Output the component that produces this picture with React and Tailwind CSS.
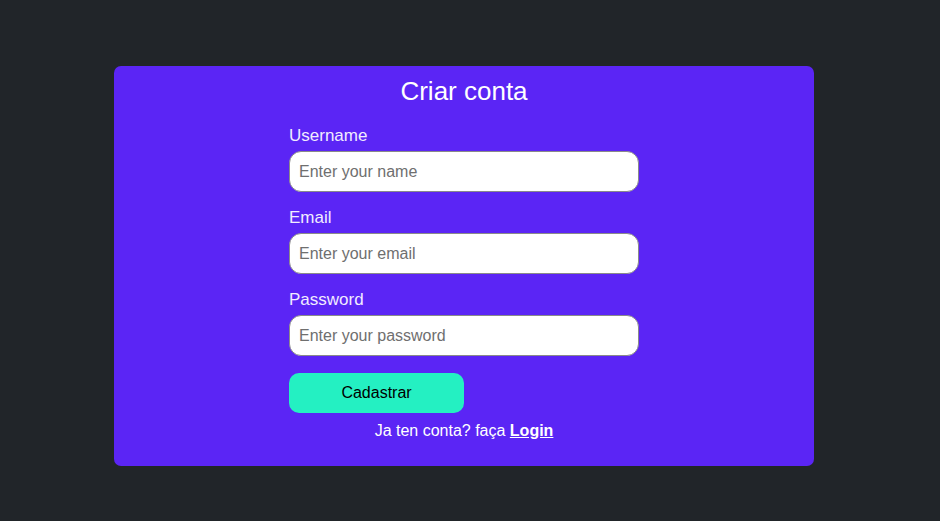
import React from 'react';

const Field = ({ label, type, placeholder }) => (
  <div className="flex flex-col">
    <label className="text-[17px] leading-[20px] text-[#f1ecff] mb-[5px]">{label}</label>
    <input
      type={type}
      placeholder={placeholder}
      className="w-[350px] h-[41px] rounded-[12px] border border-[#8a8a8a] bg-white px-[9px] text-[16px] text-black placeholder:text-[#6f6f6f] outline-none"
    />
  </div>
);

const App = () => {
  return (
    <div className="min-h-screen w-full bg-[#212529] font-['Liberation_Sans',Arial,sans-serif] pt-[66px] pl-[114px]">
      <div className="w-[700px] h-[400px] bg-[#5b25f5] rounded-[7px] flex flex-col items-center pt-[10px]">
        <h1 className="text-[26px] leading-[30px] text-white mb-[20px]">Criar conta</h1>
        <form className="w-[350px] flex flex-col gap-[16px]" onSubmit={(e) => e.preventDefault()}>
          <Field label="Username" type="text" placeholder="Enter your name" />
          <Field label="Email" type="email" placeholder="Enter your email" />
          <Field label="Password" type="password" placeholder="Enter your password" />
          <button
            type="submit"
            className="mt-[1px] w-[175px] h-[40px] rounded-[10px] bg-[#24f0c2] text-[16px] text-black"
          >
            Cadastrar
          </button>
        </form>
        <p className="mt-[9px] text-[16px] leading-[18px] text-white">
          Ja ten conta? faça <a href="#" className="font-bold underline">Login</a>
        </p>
      </div>
    </div>
  );
};

export default App;
